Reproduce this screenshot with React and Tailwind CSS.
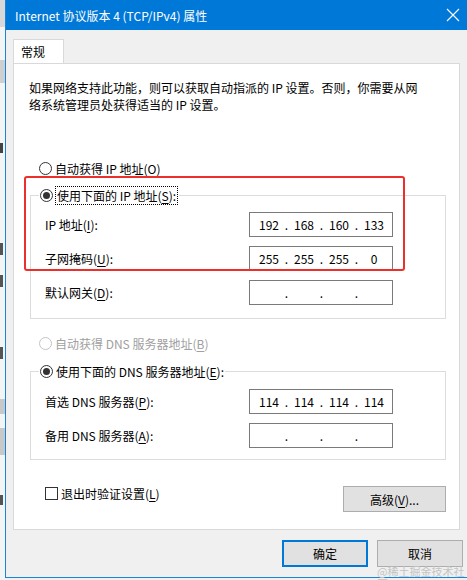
import React from 'react';

const Radio = ({ checked, disabled }) => (
    <span
        className={`flex h-[13px] w-[13px] shrink-0 items-center justify-center rounded-full border bg-white ${
            disabled ? 'border-[#c4c4c4]' : 'border-[#333333]'
        }`}
    >
        {checked && <span className="h-[7px] w-[7px] rounded-full bg-[#333333]" />}
    </span>
);

const Key = ({ children }) => <span className="underline underline-offset-2">{children}</span>;

const IpBox = ({ parts }) => (
    <div className="flex h-[25px] w-[144px] items-center border border-[#7a7a7a] bg-white pl-[5px] text-[12px]">
        {parts.map((p, i) => (
            <React.Fragment key={i}>
                <span className="w-[28px] text-center">{p}</span>
                {i < 3 && <span className="w-[7px] text-center">.</span>}
            </React.Fragment>
        ))}
    </div>
);

const Row = ({ label, parts, className }) => (
    <div className={`flex items-center pl-[14px] pr-[52px] ${className}`}>
        <span className="flex-1">{label}</span>
        <IpBox parts={parts} />
    </div>
);

const App = () => {
    const empty = ['', '', '', ''];

    return (
        <div className="relative flex h-[580px] w-[467px] overflow-hidden bg-[#f0f0f0] font-['Noto_Sans_CJK_SC',sans-serif] text-[12px] leading-[17px] text-black">
            {/* window behind the dialog */}
            <div className="flex w-[5px] flex-col bg-[#f4f4f4]">
                <div className="h-[27px] bg-[#d8d8d8]" />
                <div className="mt-[33px] h-[23px] bg-[#cfcfcf]" />
                <div className="mt-[60px] h-[10px] w-[3px] bg-[#444444]" />
                <div className="mt-[90px] h-[12px] w-[3px] bg-[#555555]" />
                <div className="mt-[20px] h-[12px] w-[3px] bg-[#555555]" />
                <div className="mt-[60px] h-[12px] w-[3px] bg-[#555555]" />
                <div className="mt-[40px] h-[15px] bg-[#c8c8c8]" />
                <div className="mt-[14px] h-[27px] bg-[#c8c8c8]" />
                <div className="mt-[40px] h-[10px] w-[3px] bg-[#555555]" />
            </div>

            <div className="flex h-[578px] flex-1 flex-col border-b border-l border-[#1883d7]">
                {/* title bar */}
                <div className="flex h-[30px] items-center justify-between bg-[#0078d7] pl-[9px] pr-[6px] text-[12px] text-white">
                    <span>Internet 协议版本 4 (TCP/IPv4) 属性</span>
                    <svg width="14" height="14" viewBox="0 0 14 14" className="mr-[1px]">
                        <path d="M1 1 L13 13 M13 1 L1 13" stroke="white" strokeWidth="1.1" fill="none" />
                    </svg>
                </div>

                {/* tab */}
                <div className="ml-[7px] mt-[9px] flex">
                    <div className="flex h-[24px] w-[51px] items-center border border-b-0 border-[#d9d9d9] bg-white pl-[7px]">
                        常规
                    </div>
                </div>

                {/* tab panel */}
                <div className="ml-[7px] mr-[7px] flex flex-col border border-[#d9d9d9] bg-white pb-[17px]">
                    <p className="ml-[15px] mt-[15px]">
                        如果网络支持此功能，则可以获取自动指派的 IP 设置。否则，你需要从网
                        <br />
                        络系统管理员处获得适当的 IP 设置。
                    </p>

                    <div className="ml-[25px] mt-[47px] flex h-[16px] items-center gap-[3px]">
                        <Radio />
                        <span>
                            自动获得 IP 地址(<Key>O</Key>)
                        </span>
                    </div>

                    <fieldset className="ml-[16px] mr-[13px] mt-[10px] border border-[#dcdcdc] pb-[13px]">
                        <legend className="ml-[8px] flex items-center gap-[2px] px-[1px]">
                            <Radio checked />
                            <span className="border border-dotted border-black px-[1px]">
                                使用下面的 IP 地址(<Key>S</Key>):
                            </span>
                        </legend>
                        <Row
                            className="mt-[7px]"
                            label={<>IP 地址(<Key>I</Key>):</>}
                            parts={['192', '168', '160', '133']}
                        />
                        <Row
                            className="mt-[9px]"
                            label={<>子网掩码(<Key>U</Key>):</>}
                            parts={['255', '255', '255', '0']}
                        />
                        <Row className="mt-[9px]" label={<>默认网关(<Key>D</Key>):</>} parts={empty} />
                    </fieldset>

                    <div className="ml-[25px] mt-[16px] flex h-[16px] items-center gap-[3px] text-[#a0a0a0]">
                        <Radio disabled />
                        <span>
                            自动获得 DNS 服务器地址(<Key>B</Key>)
                        </span>
                    </div>

                    <fieldset className="ml-[16px] mr-[13px] mt-[12px] border border-[#dcdcdc] pb-[11px]">
                        <legend className="ml-[8px] flex items-center gap-[3px] px-[1px]">
                            <Radio checked />
                            <span>
                                使用下面的 DNS 服务器地址(<Key>E</Key>):
                            </span>
                        </legend>
                        <Row
                            className="mt-[9px]"
                            label={<>首选 DNS 服务器(<Key>P</Key>):</>}
                            parts={['114', '114', '114', '114']}
                        />
                        <Row className="mt-[9px]" label={<>备用 DNS 服务器(<Key>A</Key>):</>} parts={empty} />
                    </fieldset>

                    <div className="ml-[31px] mr-[13px] mt-[26px] flex items-start">
                        <span className="mt-[1px] h-[13px] w-[13px] border border-[#333333] bg-white" />
                        <span className="-mt-[1px] ml-[3px] flex-1">
                            退出时验证设置(<Key>L</Key>)
                        </span>
                        <button className="flex h-[26px] w-[103px] items-center justify-center border border-[#adadad] bg-[#e1e1e1]">
                            高级(<Key>V</Key>)...
                        </button>
                    </div>
                </div>

                {/* dialog buttons */}
                <div className="mr-[4px] mt-[10px] flex justify-end gap-[9px]">
                    <button className="flex h-[27px] w-[86px] items-center justify-center border-2 border-[#0078d7] bg-[#e1e1e1]">
                        确定
                    </button>
                    <button className="flex h-[27px] w-[86px] items-center justify-center border border-[#adadad] bg-[#e1e1e1]">
                        取消
                    </button>
                </div>
            </div>

            {/* annotation */}
            <div className="pointer-events-none absolute left-[24px] top-[176px] h-[95px] w-[381px] rounded-[3px] border-2 border-[#ec2f2a]" />

            {/* watermark */}
            <div className="pointer-events-none absolute left-[377px] top-[565px] text-[11px] leading-[12px] text-[#c4c4c4]">
                @稀土掘金技术社区
            </div>
        </div>
    );
};

export default App;
